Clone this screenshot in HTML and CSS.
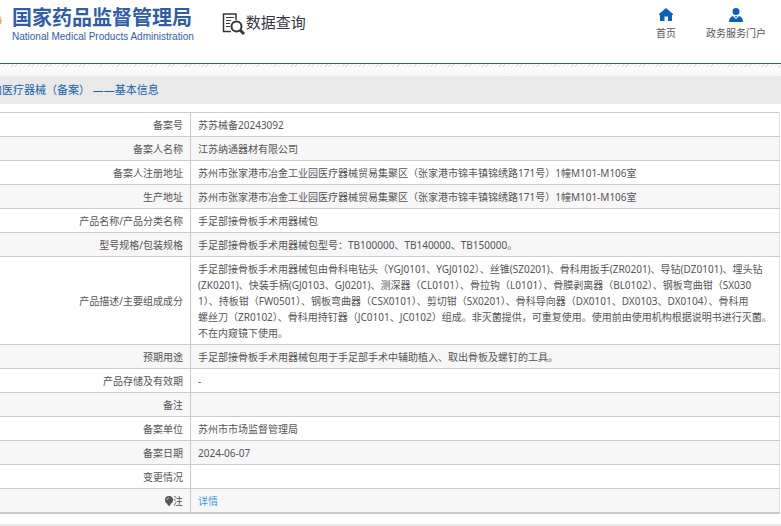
FILE: index.html
```html
<!DOCTYPE html>
<html lang="zh-CN">
<head>
    <meta charset="UTF-8">
    <meta name="viewport" content="width=device-width, initial-scale=1.0">
    <title>国家药品监督管理局 数据查询</title>
    <link rel="stylesheet" href="styles.css">
</head>
<body>
    <header class="header">
        <svg class="emblem" width="2" height="10" viewBox="0 0 2 10" aria-hidden="true">
            <path d="M0 1 L1 3 L0 5Z" fill="#d9a09a"/>
            <path d="M0 4 L2 5 L1 9 L0 9Z" fill="#e5b45c"/>
        </svg>
        <div class="brand">
            <div class="brand-name">国家药品监督管理局</div>
            <div class="brand-en">National Medical Products Administration</div>
        </div>
        <div class="search-title">
            <svg width="24" height="24" viewBox="0 0 24 24" fill="none" stroke="#35363d" aria-hidden="true">
                <path d="M14 8 V2 H1.500 V19.500 H9" stroke-width="1.500"/>
                <path d="M4 5.500 H12 M4 8.500 H9 M4 11.500 H8 M4 14.500 H8" stroke-width="1.200"/>
                <circle cx="14.500" cy="14.500" r="5" stroke-width="2"/>
                <path d="M18 18 L22 22" stroke-width="3"/>
            </svg>
            <span>数据查询</span>
        </div>
        <nav class="nav">
            <a href="#">
                <svg width="14" height="14" viewBox="0 0 14 14" fill="#0b61c1" aria-hidden="true">
                    <path d="M7 0 L14 6 V7 H13 V13 H9 V8.500 H5.500 V13 H1 V7 H0 V6Z"/>
                </svg>
                <span>首页</span>
            </a>
            <a href="#">
                <svg width="14" height="14" viewBox="0 0 14 14" fill="#0b61c1" aria-hidden="true">
                    <circle cx="7" cy="3.500" r="3.500"/>
                    <path d="M0 14 C0 10.500 1.500 8.500 4 8 L7 11 L10 8 C12.500 8.500 14 10.500 14 14Z"/>
                    <path d="M6 8 H8 L7.500 9.500 H6.500Z"/>
                </svg>
                <span>政务服务门户</span>
            </a>
        </nav>
    </header>
    <div class="stripe"></div>

    <main>
        <h1 class="page-title"><span>内医疗器械（备案） ——基本信息</span></h1>

        <table class="info">
            <tbody>
                <tr><th scope="row">备案号</th><td>苏苏械备20243092</td></tr>
                <tr><th scope="row">备案人名称</th><td>江苏纳通器材有限公司</td></tr>
                <tr><th scope="row">备案人注册地址</th><td>苏州市张家港市冶金工业园医疗器械贸易集聚区（张家港市锦丰镇锦绣路171号）1幢M101-M106室</td></tr>
                <tr><th scope="row">生产地址</th><td>苏州市张家港市冶金工业园医疗器械贸易集聚区（张家港市锦丰镇锦绣路171号）1幢M101-M106室</td></tr>
                <tr><th scope="row">产品名称/产品分类名称</th><td>手足部接骨板手术用器械包</td></tr>
                <tr><th scope="row">型号规格/包装规格</th><td>手足部接骨板手术用器械包型号：TB100000、TB140000、TB150000。</td></tr>
                <tr>
                    <th scope="row">产品描述/主要组成成分</th>
                    <td>
                        手足部接骨板手术用器械包由骨科电钻头（YGJ0101、YGJ0102）、丝锥(SZ0201)、骨科用扳手(ZR0201)、导钻(DZ0101)、埋头钻<br>
                        (ZK0201)、快装手柄(GJ0103、GJ0201)、测深器（CL0101）、骨拉钩（L0101）、骨膜剥离器（BL0102）、钢板弯曲钳（SX030<br>
                        1）、持板钳（FW0501）、钢板弯曲器（CSX0101）、剪切钳（SX0201）、骨科导向器（DX0101、DX0103、DX0104）、骨科用<br>
                        螺丝刀（ZR0102）、骨科用持钉器（JC0101、JC0102）组成。非灭菌提供，可重复使用。使用前由使用机构根据说明书进行灭菌。<br>
                        不在内窥镜下使用。
                    </td>
                </tr>
                <tr><th scope="row">预期用途</th><td>手足部接骨板手术用器械包用于手足部手术中辅助植入、取出骨板及螺钉的工具。</td></tr>
                <tr><th scope="row">产品存储及有效期</th><td>-</td></tr>
                <tr><th scope="row">备注</th><td></td></tr>
                <tr><th scope="row">备案单位</th><td>苏州市市场监督管理局</td></tr>
                <tr><th scope="row">备案日期</th><td>2024-06-07</td></tr>
                <tr><th scope="row">变更情况</th><td></td></tr>
                <tr>
                    <th scope="row">
                        <svg class="bulb" width="8" height="10" viewBox="0 0 8 10" aria-hidden="true">
                            <circle cx="4" cy="4" r="4" fill="#555"/>
                            <path d="M2.500 7 H5.500 V9 L4 10 L2.500 9Z" fill="#555"/>
                            <path d="M2 4 A2 2 0 0 1 4 2" fill="none" stroke="#ccc"/>
                        </svg>注
                    </th>
                    <td><a href="#">详情</a></td>
                </tr>
            </tbody>
        </table>
    </main>
    <footer class="footer"></footer>
</body>
</html>
```

FILE: styles.css
```css
body {
    margin: 0;
    background-color: #fff;
    color: #555;
    font-family: "Noto Sans", "Noto Sans CJK SC", sans-serif;
    font-size: 10px;
    line-height: 16px;
    overflow-x: hidden;
}
a {
    text-decoration: none;
}
.header {
    display: flex;
    align-items: flex-start;
    height: 63px;
    border-bottom: 1px solid #1f6293;
}
.emblem {
    margin-top: 15px;
}
.brand {
    margin-left: 10px;
    padding-top: 5px;
    color: #2f5dab;
    white-space: nowrap;
}
.brand-name {
    font-family: "Noto Sans CJK SC", sans-serif;
    font-size: 20px;
    font-weight: bold;
    line-height: 24px;
}
.brand-en {
    font-family: "Liberation Sans", Arial, sans-serif;
    font-size: 10px;
    line-height: 16px;
}
.search-title {
    display: flex;
    margin-left: 28px;
    padding-top: 12px;
    color: #35363d;
    font-family: "Noto Sans CJK SC", sans-serif;
    font-size: 15px;
    line-height: 20px;
    white-space: nowrap;
}
.nav {
    display: flex;
    gap: 30px;
    margin-left: auto;
    padding: 8px 15px 0 0;
}
.nav a {
    display: flex;
    flex-direction: column;
    align-items: center;
    gap: 3px;
    color: #555;
    white-space: nowrap;
}
.stripe {
    height: 12px;
    background:
        repeating-linear-gradient(135deg, #e4e4e4 0 1px, transparent 1px 3px) top / 100% 3px no-repeat,
        linear-gradient(#fff, #f5f5f5);
}
.page-title {
    margin: 0 0 8px;
    background-color: #e9e9e9;
    color: #1463b0;
    font-size: 11px;
    font-weight: normal;
    line-height: 28px;
    overflow: hidden;
    white-space: nowrap;
}
.page-title span {
    margin-left: -9px;
}
.info {
    width: calc(100% - 1px);
    border-collapse: collapse;
    border-top: 1px solid #ccc;
    border-right: 1px solid #e4e4ee;
    border-bottom: 2px solid #ccc;
}
.info tr:nth-child(even) {
    background-color: #f7f7f7;
}
.info th,
.info td {
    height: 16px;
    padding: 4px 7px 3px;
    border-bottom: 1px solid #ccc;
}
.info th {
    width: 176px;
    border-right: 1px solid #ccc;
    font-weight: normal;
    text-align: right;
}
.info td {
    padding-right: 0;
    text-align: left;
}
.info td a {
    color: #3c97ec;
}
.bulb {
    vertical-align: -1px;
}
.footer {
    margin-top: 10px;
    height: 2px;
    background-color: #ebebeb;
}
```
